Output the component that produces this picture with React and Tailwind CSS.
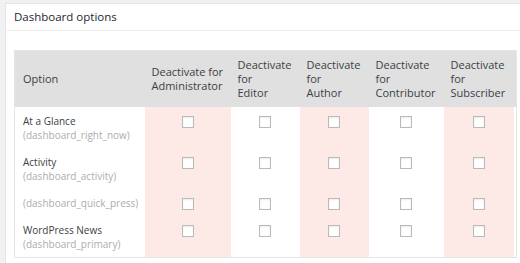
import React from 'react';

const roles = [
  { key: 'admin', lines: ['Deactivate for', 'Administrator'], pink: true, w: 'w-[86px]' },
  { key: 'editor', lines: ['Deactivate', 'for', 'Editor'], pink: false, w: 'w-[69px]' },
  { key: 'author', lines: ['Deactivate', 'for', 'Author'], pink: true, w: 'w-[69px]' },
  { key: 'contributor', lines: ['Deactivate', 'for', 'Contributor'], pink: false, w: 'w-[75px]' },
  { key: 'subscriber', lines: ['Deactivate', 'for', 'Subscriber'], pink: true, w: 'w-[70px]' },
];

const options = [
  { title: 'At a Glance', id: '(dashboard_right_now)' },
  { title: 'Activity', id: '(dashboard_activity)' },
  { title: null, id: '(dashboard_quick_press)' },
  { title: 'WordPress News', id: '(dashboard_primary)' },
];

function Box() {
  return (
    <span className="mx-auto mt-[2px] block h-[12px] w-[12px] border border-[#bababa] bg-white shadow-[inset_0_1px_2px_rgba(0,0,0,0.08)]" />
  );
}

export default function App() {
  return (
    <div className="h-[263px] w-[520px] overflow-hidden bg-[#f1f1f1] pl-[5px] pt-[3px] font-['Open_Sans',sans-serif] text-[11px] leading-[14px] text-[#3c4146]">
      <div className="h-[280px] w-[520px] border-l border-t border-[#e5e5e5] bg-white">
        <div className="flex h-[27px] items-center border-b border-[#eeeeee] pl-[8px] text-[11.5px] text-[#23282d]">
          Dashboard options
        </div>
        <div className="pl-[8px] pt-[19px]">
          <table className="w-[502px] table-fixed border-collapse border border-[#e5e5e5]">
            <thead>
              <tr className="bg-[#e0e0e0]">
                <th className="w-[130px] px-[8px] py-[7px] text-left align-middle font-normal">Option</th>
                {roles.map((r) => (
                  <th key={r.key} className={`${r.w} px-[7px] py-[7px] text-left align-middle font-normal`}>
                    {r.lines.map((l, i) => (
                      <div key={i} className="whitespace-nowrap">{l}</div>
                    ))}
                  </th>
                ))}
                <th className="w-[3px] p-0" />
              </tr>
            </thead>
            <tbody>
              {options.map((o, idx) => (
                <tr key={idx}>
                  <td className="px-[8px] pb-[6px] pt-[7px] align-top text-[10px]">
                    {o.title && <div>{o.title}</div>}
                    <div className="text-[#adadad]">{o.id}</div>
                  </td>
                  {roles.map((r) => (
                    <td
                      key={r.key}
                      className={`${r.pink ? 'bg-[#fde9e5]' : 'bg-white'} pb-[6px] pt-[7px] align-top`}
                    >
                      <Box />
                    </td>
                  ))}
                  <td className="p-0" />
                </tr>
              ))}
            </tbody>
          </table>
        </div>
      </div>
    </div>
  );
}
